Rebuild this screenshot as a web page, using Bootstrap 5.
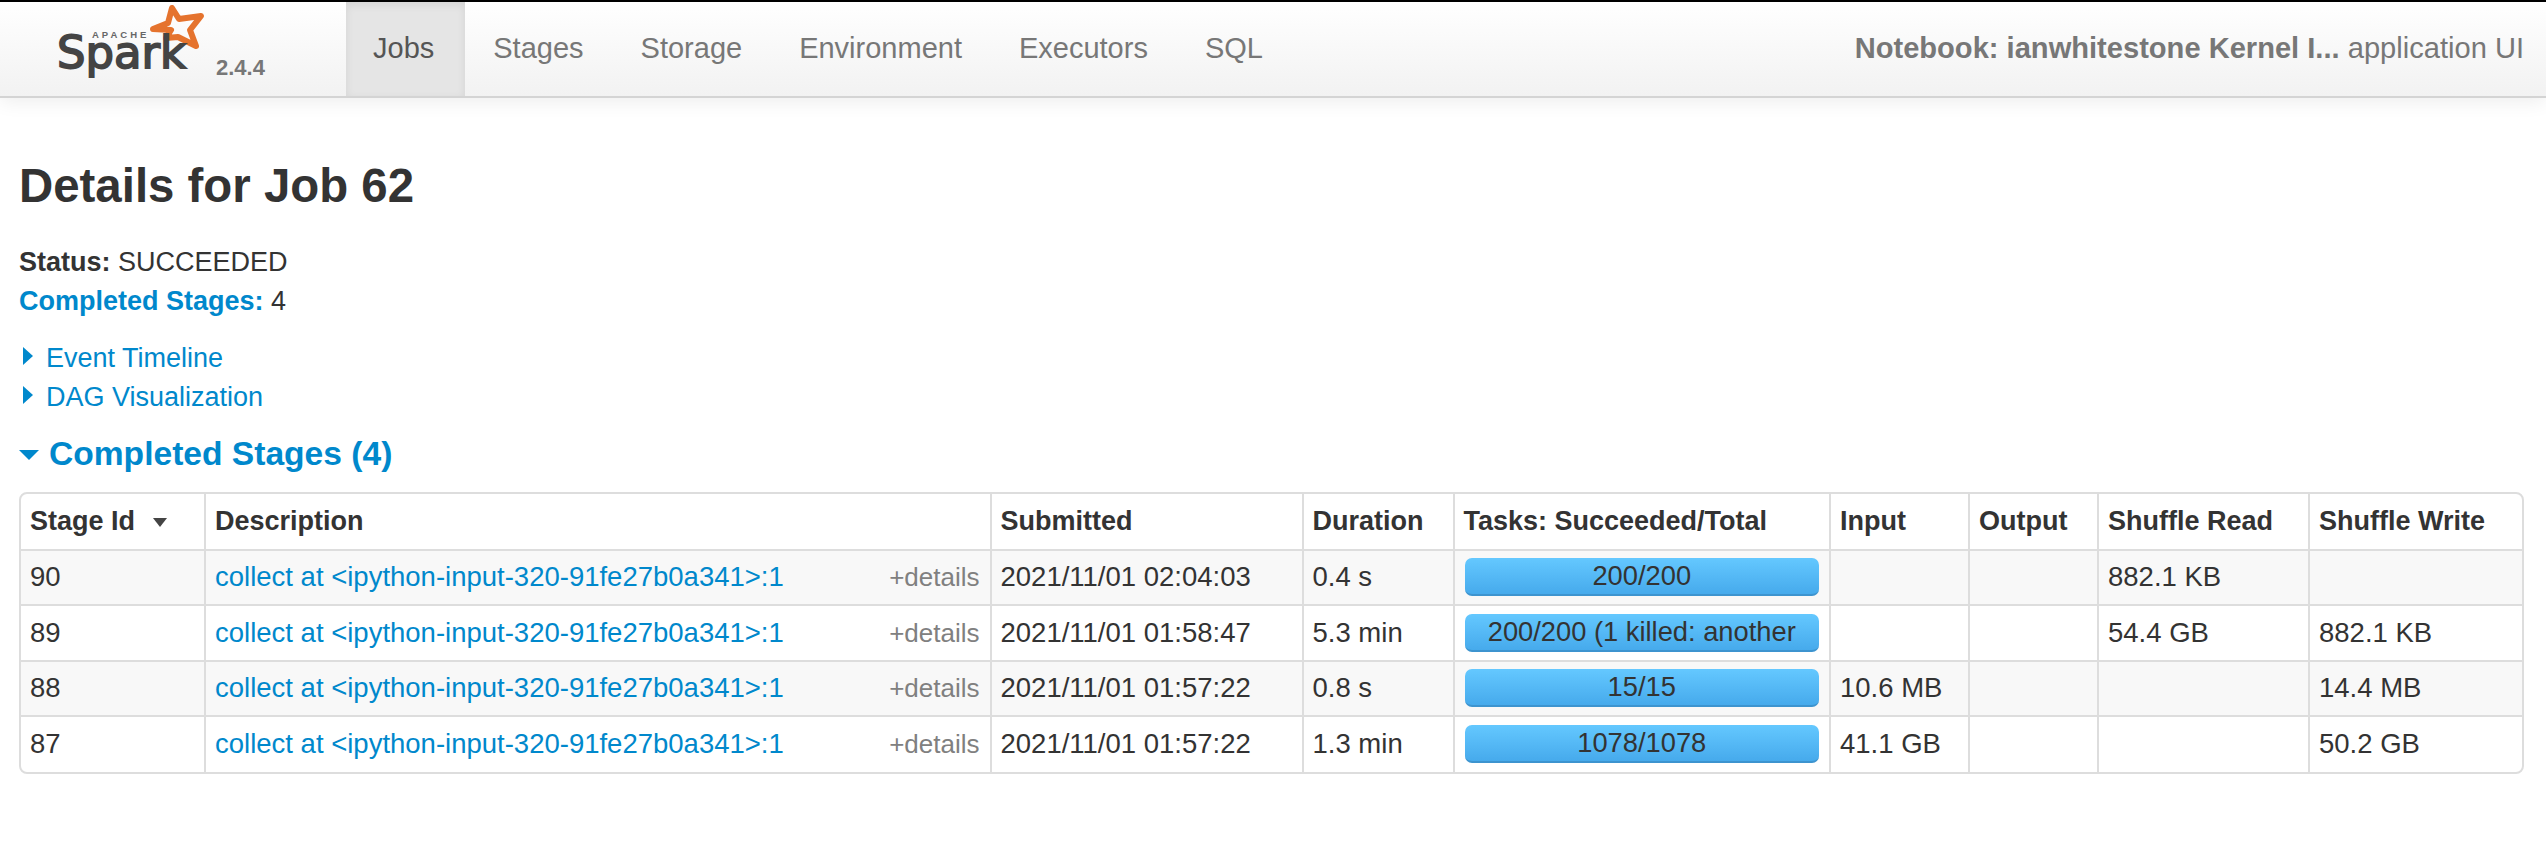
<!DOCTYPE html>
<html lang="en">
<head>
    <meta charset="UTF-8">
    <title>Details for Job 62</title>
    <link rel="stylesheet" href="https://cdn.jsdelivr.net/npm/bootstrap@5.3.2/dist/css/bootstrap.min.css">
    <style>
        body { font-family: "Liberation Sans", Arial, sans-serif; font-size: 27px; color: #333; background: #fff; border-top: 2px solid #000; }
        a { color: #0088cc; text-decoration: none; }
        .spark-nav { height: 96px; padding: 0; background: linear-gradient(#fff, #f2f2f2); border-bottom: 2px solid #d4d4d4; box-shadow: 0 4px 18px rgba(0, 0, 0, .07); flex-wrap: nowrap; align-items: stretch; }
        .spark-brand { width: 346px; flex: none; display: block; }
        .spark-brand svg { display: block; }
        .spark-word { font-family: "DejaVu Sans", sans-serif; font-size: 45px; }
        .spark-tabs .nav-link { color: #777; font-size: 29px; padding: 0 29px 0 28px; height: 94px; line-height: 92px; }
        .spark-tabs .nav-link.active { color: #555; background: #e5e5e5; padding: 0 31px 0 27px; box-shadow: inset 0 3px 8px rgba(0, 0, 0, .08); }
        .app-title { color: #777; font-size: 29.1px; padding-right: 22px; line-height: 92px; white-space: nowrap; }
        .page-body { padding: 0 22px 0 19px; }
        .job-title { font-size: 47.4px; font-weight: 700; color: #333; line-height: 56px; margin: 60px 0 29px; }
        .info-list { line-height: 39px; margin-bottom: 18px; }
        .tri-right { display: inline-block; border-left: 10px solid #0088cc; border-top: 9px solid transparent; border-bottom: 9px solid transparent; margin: 0 13px 2px 4px; }
        .tri-down { display: inline-block; border-top: 10px solid #0088cc; border-left: 10px solid transparent; border-right: 10px solid transparent; margin: 0 10px 5px 0; }
        .stages-title { font-size: 33.6px; font-weight: 700; color: #0088cc; line-height: 42px; margin: 16px 0 17px; }
        .table-frame { border: 2px solid #ddd; border-radius: 8px; overflow: hidden; }
        .stage-table { table-layout: fixed; width: 100%; margin: 0; font-size: 27.5px; color: #333; --bs-table-color: #333; --bs-table-striped-color: #333; --bs-table-striped-bg: #f8f8f8; }
        .stage-table th, .stage-table td { height: 55.5px; padding: 0 10px 0 9px; border: 0; border-right: 2px solid #ddd; border-bottom: 2px solid #ddd; vertical-align: middle; white-space: nowrap; line-height: 32px; }
        .stage-table th:last-child, .stage-table td:last-child { border-right: 0; }
        .stage-table tr:last-child td { border-bottom: 0; }
        .stage-table th { font-weight: 700; font-size: 27px; }
        .sort-arrow { display: inline-block; border-top: 9px solid #444; border-left: 7px solid transparent; border-right: 7px solid transparent; margin: 0 0 3px 10px; }
        .details-link { color: #808080; font-size: 26px; }
        .c-id { width: 184px; } .c-desc { width: 785.5px; } .c-sub { width: 312px; } .c-dur { width: 151px; }
        .c-tasks { width: 376.5px; } .c-input { width: 139px; } .c-output { width: 129px; } .c-read { width: 211px; } .c-write { width: auto; }
        .task-bar { height: 38px; margin-left: 1px; border-radius: 7px; background: linear-gradient(#64c8ff, #46aaec); border-bottom: 2px solid #3d94cf; text-align: center; font-size: 27.3px; line-height: 36px; color: #333; overflow: hidden; white-space: normal; }
    </style>
</head>
<body>

<nav class="navbar spark-nav">
    <a class="spark-brand" href="#">
        <svg width="346" height="94" viewBox="0 0 346 94">
            <path d="M172 6 L179 17 L201 14 L190 28 L196 44 L178 35 L166 36 L171 28 L153 27 L168 21 Z" fill="none" stroke="#e5732e" stroke-width="6" stroke-linejoin="round"/>
            <text x="92" y="36" font-family="Liberation Sans" font-weight="700" font-size="9.5" letter-spacing="3" fill="#666">APACHE</text>
            <text class="spark-word" x="57" y="66" textLength="129" lengthAdjust="spacingAndGlyphs" stroke="#444" stroke-width="1.8" fill="#444">Spark</text>
            <text x="216" y="73" font-family="Liberation Sans" font-weight="700" font-size="22" fill="#777">2.4.4</text>
        </svg>
    </a>
    <ul class="nav spark-tabs me-auto flex-nowrap">
        <li class="nav-item"><a class="nav-link active" href="#">Jobs</a></li>
        <li class="nav-item"><a class="nav-link" href="#">Stages</a></li>
        <li class="nav-item"><a class="nav-link" href="#">Storage</a></li>
        <li class="nav-item"><a class="nav-link" href="#">Environment</a></li>
        <li class="nav-item"><a class="nav-link" href="#">Executors</a></li>
        <li class="nav-item"><a class="nav-link" href="#">SQL</a></li>
    </ul>
    <span class="app-title"><strong>Notebook: ianwhitestone Kernel I...</strong> application UI</span>
</nav>

<div class="page-body">
    <h3 class="job-title">Details for Job 62</h3>

    <div class="info-list">
        <div><strong>Status:</strong> SUCCEEDED</div>
        <div><a href="#"><strong>Completed Stages:</strong></a> 4</div>
    </div>

    <div class="info-list mb-0">
        <div><a href="#"><span class="tri-right"></span>Event Timeline</a></div>
        <div><a href="#"><span class="tri-right"></span>DAG Visualization</a></div>
    </div>

    <h4 class="stages-title"><span class="tri-down"></span>Completed Stages (4)</h4>

    <div class="table-frame">
        <table class="table table-striped stage-table">
            <colgroup>
                <col class="c-id"><col class="c-desc"><col class="c-sub"><col class="c-dur"><col class="c-tasks">
                <col class="c-input"><col class="c-output"><col class="c-read"><col class="c-write">
            </colgroup>
            <thead>
                <tr>
                    <th>Stage Id <span class="sort-arrow"></span></th>
                    <th>Description</th>
                    <th>Submitted</th>
                    <th>Duration</th>
                    <th>Tasks: Succeeded/Total</th>
                    <th>Input</th>
                    <th>Output</th>
                    <th>Shuffle Read</th>
                    <th>Shuffle Write</th>
                </tr>
            </thead>
            <tbody>
                <tr>
                    <td>90</td>
                    <td><div class="d-flex justify-content-between"><a href="#">collect at &lt;ipython-input-320-91fe27b0a341&gt;:1</a><a class="details-link" href="#">+details</a></div></td>
                    <td>2021/11/01 02:04:03</td>
                    <td>0.4 s</td>
                    <td><div class="task-bar">200/200</div></td>
                    <td></td>
                    <td></td>
                    <td>882.1 KB</td>
                    <td></td>
                </tr>
                <tr>
                    <td>89</td>
                    <td><div class="d-flex justify-content-between"><a href="#">collect at &lt;ipython-input-320-91fe27b0a341&gt;:1</a><a class="details-link" href="#">+details</a></div></td>
                    <td>2021/11/01 01:58:47</td>
                    <td>5.3 min</td>
                    <td><div class="task-bar">200/200 (1 killed: another attempt succeeded)</div></td>
                    <td></td>
                    <td></td>
                    <td>54.4 GB</td>
                    <td>882.1 KB</td>
                </tr>
                <tr>
                    <td>88</td>
                    <td><div class="d-flex justify-content-between"><a href="#">collect at &lt;ipython-input-320-91fe27b0a341&gt;:1</a><a class="details-link" href="#">+details</a></div></td>
                    <td>2021/11/01 01:57:22</td>
                    <td>0.8 s</td>
                    <td><div class="task-bar">15/15</div></td>
                    <td>10.6 MB</td>
                    <td></td>
                    <td></td>
                    <td>14.4 MB</td>
                </tr>
                <tr>
                    <td>87</td>
                    <td><div class="d-flex justify-content-between"><a href="#">collect at &lt;ipython-input-320-91fe27b0a341&gt;:1</a><a class="details-link" href="#">+details</a></div></td>
                    <td>2021/11/01 01:57:22</td>
                    <td>1.3 min</td>
                    <td><div class="task-bar">1078/1078</div></td>
                    <td>41.1 GB</td>
                    <td></td>
                    <td></td>
                    <td>50.2 GB</td>
                </tr>
            </tbody>
        </table>
    </div>
</div>

<script src="https://cdn.jsdelivr.net/npm/bootstrap@5.3.2/dist/js/bootstrap.bundle.min.js"></script>
</body>
</html>
